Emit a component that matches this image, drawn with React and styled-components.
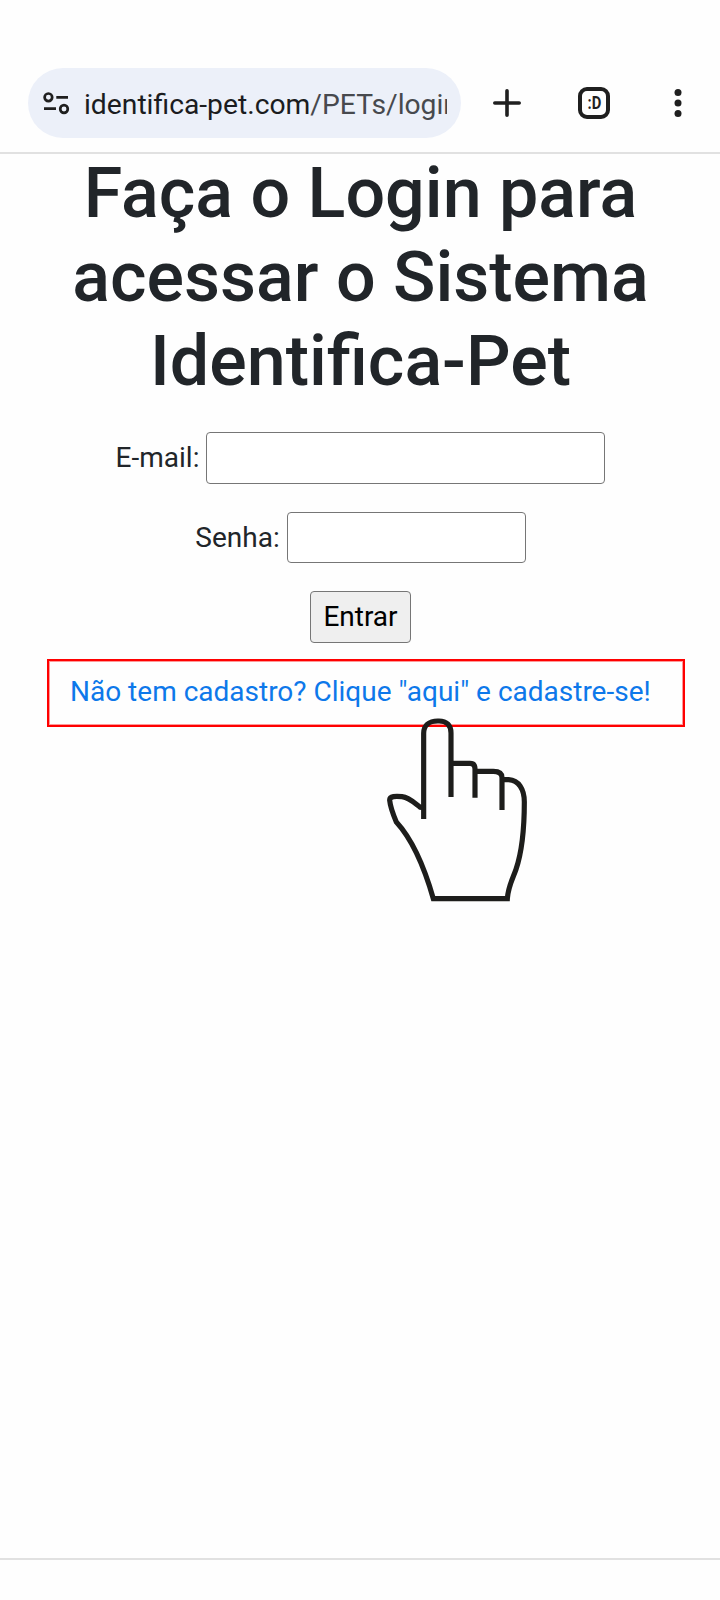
import React, { useState } from 'react';
import styled, { createGlobalStyle } from 'styled-components';

const GlobalStyle = createGlobalStyle`
    * {
        box-sizing: border-box;
    }

    body {
        margin: 0;
        background-color: #fefefe;
        font-family: Roboto, 'Noto Sans', sans-serif;
        font-size: 28px;
        color: #212529;
    }
`;

const Screen = styled.div`
    width: 720px;
    height: 1600px;
    display: flex;
    flex-direction: column;
    overflow: hidden;
`;

const Toolbar = styled.header`
    height: 154px;
    padding: 68px 28px 0 28px;
    border-bottom: 2px solid #e1e1e1;
    display: flex;
    align-items: flex-start;
    flex-shrink: 0;
`;

const AddressBar = styled.div`
    width: 433px;
    height: 70px;
    padding: 0 14px 0 15px;
    border-radius: 35px;
    background-color: #ecf0f9;
    display: flex;
    align-items: center;

    svg {
        flex-shrink: 0;
        margin-right: 14px;
    }
`;

const Url = styled.div`
    flex: 1;
    padding-top: 3px;
    overflow: hidden;
    white-space: nowrap;
    font-size: 28.25px;
    line-height: 40px;
    color: #1b1c20;

    span {
        color: #47494e;
    }
`;

const ToolbarIcons = styled.div`
    flex: 1;
    height: 70px;
    padding-left: 31px;
    display: flex;
    align-items: center;
`;

const IconButton = styled.button`
    width: ${props => props.$width}px;
    height: 70px;
    padding: 0;
    border: none;
    background: none;
    display: flex;
    align-items: center;
    justify-content: flex-start;
    flex-shrink: 0;
`;

const TabBox = styled.span`
    width: 32px;
    height: 32px;
    border: 4px solid #1f1f1f;
    border-radius: 9px;
    display: flex;
    align-items: center;
    justify-content: center;
    font: bold 18px/24px Roboto, sans-serif;
    color: #1f1f1f;

    span {
        transform: scaleX(0.82);
    }
`;

const Page = styled.main`
    flex: 1;
    margin-top: -3px;
    padding-left: 1px;
    display: flex;
    flex-direction: column;
    align-items: center;
`;

const Title = styled.h1`
    margin: 0 0 29px;
    font-size: 70px;
    font-weight: 500;
    line-height: 84px;
    text-align: center;
`;

const Form = styled.form`
    display: flex;
    flex-direction: column;
    align-items: center;
`;

const Field = styled.label`
    height: ${props => props.$height}px;
    margin-bottom: ${props => props.$gap}px;
    display: flex;
    align-items: center;
    line-height: 42px;
`;

const Input = styled.input`
    width: ${props => props.$width}px;
    height: 100%;
    margin: 0 0 0 7px;
    padding: 2px 4px;
    border: 1px solid #767676;
    border-radius: 4px;
    background-color: #fff;
    font: inherit;
    outline: none;
`;

const Submit = styled.button`
    width: 101px;
    height: 52px;
    padding: 0 0 2px;
    border: 1px solid #767676;
    border-radius: 4px;
    background-color: #efefef;
    font: inherit;
    color: #000;
`;

const Highlight = styled.div`
    position: relative;
    width: 638px;
    height: 68px;
    margin: 16px 0 0 11px;
    padding: 0 0 3px 21px;
    border: 2px solid #ff0000;
    box-shadow: inset 0 0 0 1px rgba(255, 0, 0, 0.4);
    display: flex;
    align-items: center;
`;

const SignUpLink = styled.a`
    color: #0d78ea;
    text-decoration: none;
    white-space: nowrap;
    line-height: 42px;
`;

const Pointer = styled.svg`
    position: absolute;
    top: 39px;
    left: 321px;
    pointer-events: none;
`;

const BottomBar = styled.footer`
    height: 42px;
    border-top: 2px solid #e1e1e1;
    flex-shrink: 0;
`;

const TuneIcon = () => (
    <svg width='27' height='24' viewBox='0 0 27 24' fill='none' stroke='#1f1f1f' strokeWidth='2.7'>
        <circle cx='5.4' cy='6.3' r='3.8' />
        <path d='M13.3 6.4H25M1 17.6h12' />
        <circle cx='21' cy='18' r='3.8' />
    </svg>
);

const PlusIcon = () => (
    <svg width='30' height='30' viewBox='0 0 30 30' stroke='#1f1f1f' strokeWidth='3.6' strokeLinecap='round'>
        <path d='M15 2.8v24.4M2.8 15h24.4' />
    </svg>
);

const DotsIcon = () => (
    <svg width='8' height='30' viewBox='0 0 8 30' fill='#1f1f1f'>
        <circle cx='4' cy='4.5' r='3.5' />
        <circle cx='4' cy='15' r='3.5' />
        <circle cx='4' cy='25.5' r='3.5' />
    </svg>
);

const Hand = () => (
    <Pointer width='180' height='220' viewBox='0 0 540 660' fill='none' stroke='#1d1d1b' strokeWidth='15.5'>
        <path d='M161 357V100C161 76 177 63 203 63H207C230 63 243 76 243 99V291' />
        <path d='M243 190H300Q315 190 315 207V293' />
        <path d='M315 214H370Q396 214 396 233V330' />
        <path d='M396 239H416C446 241 463 267 463 306C463 390 456 455 438 508C429 534 414 560 412 596H190C170 526 137 429 79 366C70 345 61 321 59 301C58 288 78 288 96 290C119 293 137 312 151 322L161 323' />
    </Pointer>
);

const App = () => {
    const [email, setEmail] = useState('');
    const [password, setPassword] = useState('');

    return (
        <Screen>
            <GlobalStyle />
            <Toolbar>
                <AddressBar>
                    <TuneIcon />
                    <Url>identifica-pet.com<span>/PETs/login</span></Url>
                </AddressBar>
                <ToolbarIcons>
                    <IconButton $width={86} aria-label='Nova guia'><PlusIcon /></IconButton>
                    <IconButton $width={96} aria-label='Guias'><TabBox><span>:D</span></TabBox></IconButton>
                    <IconButton $width={8} aria-label='Menu'><DotsIcon /></IconButton>
                </ToolbarIcons>
            </Toolbar>
            <Page>
                <Title>Faça o Login para<br />acessar o Sistema<br />Identifica-Pet</Title>
                <Form onSubmit={e => e.preventDefault()}>
                    <Field $height={52} $gap={28}>
                        E-mail:
                        <Input $width={399} type='email' value={email} onChange={e => setEmail(e.target.value)} />
                    </Field>
                    <Field $height={51} $gap={28}>
                        Senha:
                        <Input $width={239} type='password' value={password} onChange={e => setPassword(e.target.value)} />
                    </Field>
                    <Submit>Entrar</Submit>
                </Form>
                <Highlight>
                    <SignUpLink href='#'>Não tem cadastro? Clique "aqui" e cadastre-se!</SignUpLink>
                    <Hand />
                </Highlight>
            </Page>
            <BottomBar />
        </Screen>
    );
};

export default App;
